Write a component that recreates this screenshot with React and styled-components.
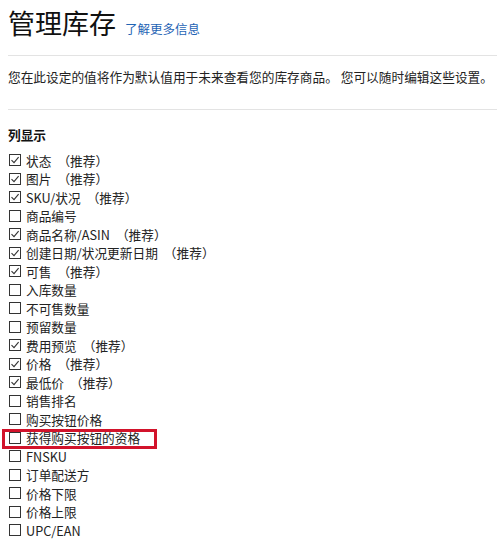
import React from 'react'
import styled, { createGlobalStyle } from 'styled-components'

const GlobalStyle = createGlobalStyle`
  html, body {
    margin: 0;
    padding: 0;
    background: #fff;
  }
  body {
    font-family: "Noto Sans CJK SC", "Noto Sans", "Liberation Sans", sans-serif;
    color: #111;
  }
`

const Page = styled.div`
  padding: 0 0 0 8px;
  width: 497px;
  box-sizing: border-box;
`

const Header = styled.div`
  display: flex;
  align-items: baseline;
  gap: 9px;
  height: 55px;
  padding-top: 2px;
  box-sizing: border-box;
`

const Title = styled.h1`
  margin: 0;
  font-size: 27px;
  font-weight: 400;
  line-height: 42px;
  color: #111;
`

const Link = styled.a`
  font-size: 12.5px;
  color: #1f64b5;
  text-decoration: none;
`

const Divider = styled.hr`
  margin: 0;
  border: 0;
  border-top: 1px solid #e3e3e3;
`

const Description = styled.p`
  margin: 0;
  height: 53px;
  padding-top: 11px;
  box-sizing: border-box;
  font-size: 12.7px;
  line-height: 20px;
  color: #222;
  white-space: nowrap;
`

const SectionTitle = styled.h2`
  margin: 0;
  padding-top: 15px;
  height: 41px;
  font-size: 12.7px;
  font-weight: 700;
  line-height: 20px;
  box-sizing: border-box;
`

const List = styled.ul`
  list-style: none;
  margin: 0;
  padding: 0;
`

const Row = styled.li`
  display: flex;
  align-items: center;
  height: 18.5px;
  gap: 5px;
  font-size: 12.7px;
  color: #222;
  position: relative;
  ${(p) =>
    p.$highlight &&
    `
    &::before {
      content: '';
      position: absolute;
      left: -6px;
      top: 0;
      width: 155px;
      height: 20px;
      border: 3px solid #d2132b;
      box-sizing: border-box;
    }
  `}
`

const Box = styled.svg`
  flex: none;
  width: 12px;
  height: 12px;
  margin-left: 1px;
`

const Tag = styled.span`
  margin-left: 1px;
`

function CheckBox({ checked }) {
  return (
    <Box viewBox="0 0 12 12">
      <rect x="0.5" y="0.5" width="11" height="11" fill="#fff" stroke="#333" strokeWidth="1" />
      {checked && (
        <path d="M2.5 6.2 L5 8.6 L9.6 3.2" fill="none" stroke="#333" strokeWidth="1.1" />
      )}
    </Box>
  )
}

const columns = [
  { label: '状态', checked: true, rec: true },
  { label: '图片', checked: true, rec: true },
  { label: 'SKU/状况', checked: true, rec: true },
  { label: '商品编号' },
  { label: '商品名称/ASIN', checked: true, rec: true },
  { label: '创建日期/状况更新日期', checked: true, rec: true },
  { label: '可售', checked: true, rec: true },
  { label: '入库数量' },
  { label: '不可售数量' },
  { label: '预留数量' },
  { label: '费用预览', checked: true, rec: true },
  { label: '价格', checked: true, rec: true },
  { label: '最低价', checked: true, rec: true },
  { label: '销售排名' },
  { label: '购买按钮价格' },
  { label: '获得购买按钮的资格', highlight: true },
  { label: 'FNSKU' },
  { label: '订单配送方' },
  { label: '价格下限' },
  { label: '价格上限' },
  { label: 'UPC/EAN' },
]

export default function App() {
  return (
    <Page>
      <GlobalStyle />
      <Header>
        <Title>管理库存</Title>
        <Link href="#">了解更多信息</Link>
      </Header>
      <Divider />
      <Description>
        您在此设定的值将作为默认值用于未来查看您的库存商品。 您可以随时编辑这些设置。
      </Description>
      <Divider />
      <SectionTitle>列显示</SectionTitle>
      <List>
        {columns.map((c) => (
          <Row key={c.label} $highlight={c.highlight}>
            <CheckBox checked={c.checked} />
            <span>{c.label}</span>
            {c.rec && <Tag>（推荐）</Tag>}
          </Row>
        ))}
      </List>
    </Page>
  )
}
